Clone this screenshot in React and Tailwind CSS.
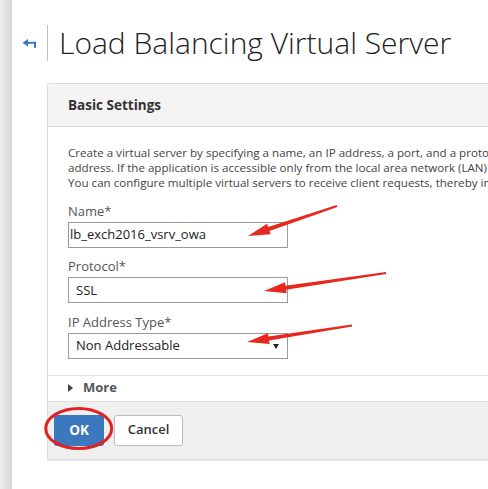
import React from "react";

function arrowPoints(tx, ty, px, py, headLen = 22, headHalf = 5.5, tailHalf = 1, neckHalf = 2) {
  const dx = px - tx, dy = py - ty;
  const len = Math.hypot(dx, dy);
  const ux = dx / len, uy = dy / len;
  const nx = -uy, ny = ux;
  const bx = px - headLen * ux, by = py - headLen * uy;
  const pts = [
    [tx + tailHalf * nx, ty + tailHalf * ny],
    [bx + neckHalf * nx, by + neckHalf * ny],
    [bx + headHalf * nx, by + headHalf * ny],
    [px, py],
    [bx - headHalf * nx, by - headHalf * ny],
    [bx - neckHalf * nx, by - neckHalf * ny],
    [tx - tailHalf * nx, ty - tailHalf * ny],
  ];
  return pts.map((p) => p[0].toFixed(1) + "," + p[1].toFixed(1)).join(" ");
}

function Field({ label, value, select, padClass, className }) {
  return (
    <div className={className}>
      <div className="h-[16px] leading-[16px] text-[13px] text-[#555555]">{label}</div>
      <div className="mt-[3px] w-[220px] h-[26px] border border-[#9a9a9a] bg-white flex items-center relative">
        <span className={"text-[13px] text-[#222222] leading-none " + padClass}>{value}</span>
        {select && (
          <svg className="absolute right-[8px] top-[10px]" width="6" height="5" viewBox="0 0 6 5">
            <polygon points="0,0 6,0 3,5" fill="#222222" />
          </svg>
        )}
      </div>
    </div>
  );
}

export default function App() {
  return (
    <div
      className="w-[488px] h-[489px] overflow-hidden relative flex bg-white"
      style={{ fontFamily: '"Open Sans", "Noto Sans", sans-serif' }}
    >
      <div className="w-[12px] h-full shrink-0 bg-gradient-to-r from-[#efefef] to-[#d6d6d6]" />
      <div className="flex-1 pl-[10px] pt-[25px] min-w-0 overflow-hidden">
        <div className="flex items-center h-[36px]">
          <svg width="14" height="9" viewBox="0 0 14 9" className="mt-[1px]">
            <polygon points="0.5,3.8 6,0 6,7.6" fill="#3a78c0" />
            <rect x="5" y="2.8" width="9" height="2" fill="#3a78c0" />
            <rect x="12" y="2.8" width="2" height="6" fill="#3a78c0" />
          </svg>
          <div className="ml-[11px] w-px h-[36px] bg-[#bdbdbd]" />
          <h1 className="ml-[11px] text-[30px] font-light text-[#222222] leading-none whitespace-nowrap -mt-[1px]">
            Load Balancing Virtual Server
          </h1>
        </div>

        <div className="mt-[22px] ml-[25px] w-[480px] border border-[#dcdcdc] rounded-t-[3px] shadow-[0_1px_1px_rgba(0,0,0,0.12)]">
          <div className="h-[43px] bg-[#f4f4f4] border-b border-[#dcdcdc] flex items-center px-[20px]">
            <span className="text-[13.5px] font-bold text-[#333333]">Basic Settings</span>
          </div>
          <div className="px-[20px] pt-[18px] pb-[16px] bg-white">
            <div className="w-[420px] text-[11.6px] leading-[15px] text-[#444444] whitespace-nowrap overflow-hidden">
              <div>Create a virtual server by specifying a name, an IP address, a port, and a protoc</div>
              <div>address. If the application is accessible only from the local area network (LAN)</div>
              <div>You can configure multiple virtual servers to receive client requests, thereby inc</div>
            </div>
            <Field className="mt-[12.5px]" label="Name*" value="lb_exch2016_vsrv_owa" padClass="pl-[1px]" />
            <Field className="mt-[10.5px]" label="Protocol*" value="SSL" padClass="pl-[7px]" />
            <Field className="mt-[10.5px]" label="IP Address Type*" value="Non Addressable" padClass="pl-[7px]" select />
          </div>
          <div className="h-[26px] border-t border-[#e2e2e2] bg-white flex items-center px-[20px]">
            <svg width="5" height="8" viewBox="0 0 5 8">
              <polygon points="0,0 5,4 0,8" fill="#444444" />
            </svg>
            <span className="ml-[10px] text-[13px] font-bold text-[#555555]">More</span>
          </div>
          <div className="h-[58px] border-t border-[#dedede] bg-[#efefef] flex items-start pt-[13px] pl-[6px] gap-[10px]">
            <button className="w-[50px] h-[31px] bg-[#3b78bd] rounded-[3px] text-white text-[13.5px] font-bold">OK</button>
            <button className="w-[69px] h-[31px] bg-white border border-[#bcbcbc] rounded-[3px] text-[#333333] text-[13px] font-semibold">Cancel</button>
          </div>
        </div>
      </div>

      <svg className="absolute inset-0 pointer-events-none" width="488" height="489" viewBox="0 0 488 489">
        <polygon points={arrowPoints(337, 206, 248, 236)} fill="#e8281e" />
        <polygon points={arrowPoints(386, 273, 264, 291)} fill="#e8281e" />
        <polygon points={arrowPoints(352, 325.5, 247, 342)} fill="#e8281e" />
        <ellipse cx="78.7" cy="428.5" rx="33" ry="20" fill="none" stroke="#e02222" strokeWidth="3" />
      </svg>
    </div>
  );
}
